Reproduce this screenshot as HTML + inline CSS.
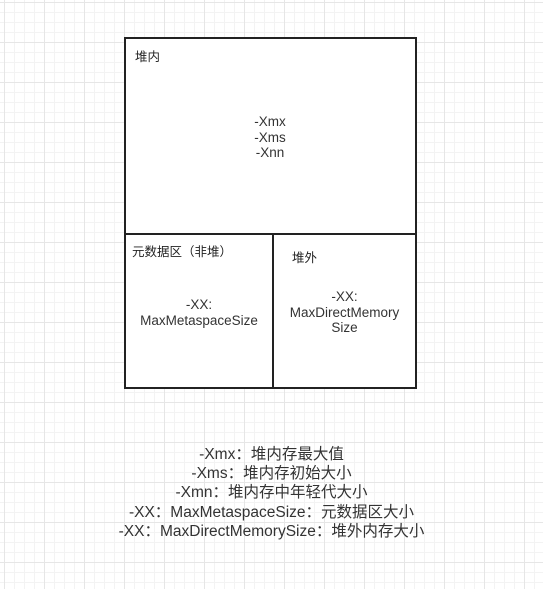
<!DOCTYPE html>
<html><head><meta charset="utf-8"><style>
body{margin:0;width:543px;height:589px;overflow:hidden;background:#fff;
background-image:linear-gradient(#e6e6e6 1px,transparent 1px),linear-gradient(90deg,#e6e6e6 1px,transparent 1px),linear-gradient(#f3f3f3 1px,transparent 1px),linear-gradient(90deg,#f3f3f3 1px,transparent 1px);
background-size:40px 40px,40px 40px,10px 10px,10px 10px;background-position:4px 2px;
font-family:"Liberation Sans","Noto Sans CJK SC",sans-serif;color:#222;position:relative}
.b{position:absolute;border:2px solid #222;box-sizing:border-box;background:#fff}
.t{position:absolute;font-size:12.5px;white-space:nowrap}
.c{position:absolute;font-size:13.5px;text-align:center;line-height:15.5px;color:#333}
.bot{position:absolute;left:0;width:543px;top:445px;text-align:center;font-size:15.5px;line-height:19.2px;color:#333}
</style></head><body>
<div class="b" style="left:124px;top:37px;width:293px;height:352px"></div>
<div style="position:absolute;left:124px;top:233px;width:293px;height:2px;background:#222"></div>
<div style="position:absolute;left:272px;top:234px;width:2px;height:155px;background:#222"></div>
<div class="t" style="left:135px;top:46px">堆内</div>
<div class="c" style="left:220px;width:100px;top:114px">-Xmx<br>-Xms<br>-Xnn</div>
<div class="t" style="left:132px;top:241px">元数据区（非堆）</div>
<div class="c" style="left:126px;width:146px;top:297px">-XX:<br>MaxMetaspaceSize</div>
<div class="t" style="left:292px;top:247px">堆外</div>
<div class="c" style="left:274px;width:141px;top:289px">-XX:<br>MaxDirectMemory<br>Size</div>
<div class="bot">-Xmx：堆内存最大值<br>-Xms：堆内存初始大小<br>-Xmn：堆内存中年轻代大小<br>-XX：MaxMetaspaceSize：元数据区大小<br>-XX：MaxDirectMemorySize：堆外内存大小</div>
</body></html>
